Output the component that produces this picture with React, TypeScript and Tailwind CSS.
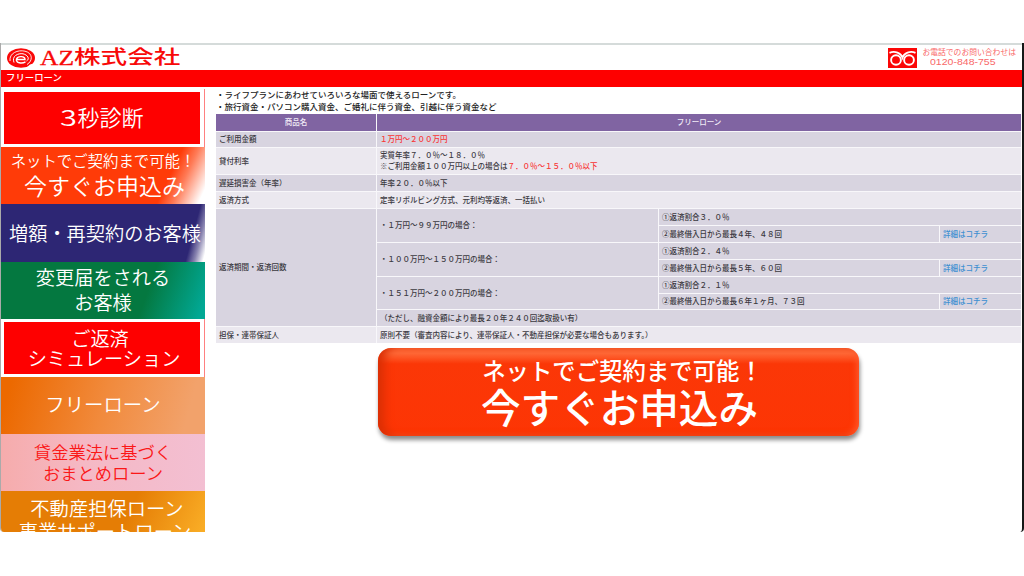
import { clsx } from "clsx";
import type { ReactNode } from "react";

const PLANS = [
  { label: "・１万円～９９万円の場合：", rate: "①返済割合３．０％", term: "②最終借入日から最長４年、４８回" },
  { label: "・１００万円～１５０万円の場合：", rate: "①返済割合２．４％", term: "②最終借入日から最長５年、６０回" },
  { label: "・１５１万円～２００万円の場合：", rate: "①返済割合２．１％", term: "②最終借入日から最長６年１ヶ月、７３回" },
];

function Cell({ children, className, light }: { children?: ReactNode; className?: string; light?: boolean }) {
  return (
    <div className={clsx("flex items-center pb-[2px] pl-[3px]", light ? "bg-[#ebe8ef]" : "bg-[#d8d4e0]", className)}>
      <div>{children}</div>
    </div>
  );
}

function Header() {
  return (
    <header>
      <div className="flex h-[27px] items-center border-t-2 border-[#d5dbda] bg-white pl-[5px] text-[#f80808]">
        <svg width="30" height="22" viewBox="0 0 30 22" className="shrink-0">
          <ellipse cx="15" cy="11" rx="14" ry="9.8" fill="#fa0808" />
          <path d="M4 14C3 6 12 2.5 19 4.2C27 6 27 14 21 17.5" fill="none" stroke="#fff" strokeWidth="0.9" />
          <path d="M8 15.5C5.5 9 12 6 17 6.8C22 8 24 12 20.5 14" fill="none" stroke="#fff" strokeWidth="1" />
          <path d="M11 12.5H19C19 9 12 8.5 10.5 12C9.5 16 16 17 19.5 14.8" fill="none" stroke="#fff" strokeWidth="1.4" />
          <path d="M24 17.5L30 16V22H19Z" fill="#fff" />
        </svg>
        <div className="ml-[4px] flex w-[142px] items-center pb-[3px] whitespace-nowrap">
          <span className="w-[34px] shrink-0 pt-[3px] font-['Liberation_Serif',serif] text-[22px] leading-[20px] [-webkit-text-stroke:0.3px_#f80808]">
            <span className="inline-block origin-left scale-x-[1.16]">AZ</span>
          </span>
          <span className="inline-block origin-left scale-x-[1.33] scale-y-[0.96] text-[20px] leading-[22px] font-medium">株式会社</span>
        </div>
        <div className="ml-auto flex items-center pr-[6px]">
          <svg width="29" height="20" viewBox="0 0 29 20">
            <rect width="29" height="20" fill="#fb0707" />
            <g fill="none" stroke="#fff" strokeWidth="1.9">
              <path d="M1.5 4.8C7 2.5 13 5 14.5 9.5C16 5 22 2.5 27.5 4.8" />
              <ellipse cx="8" cy="12" rx="4.9" ry="4.8" />
              <ellipse cx="21" cy="12" rx="4.9" ry="4.8" />
            </g>
          </svg>
          <div className="ml-[5px] pb-px whitespace-nowrap text-[#f96868]">
            <div className="h-[10px] text-[7.8px] leading-[9px]">お電話でのお問い合わせは</div>
            <div className="ml-[8px] h-[10px] w-[67px] font-['Liberation_Sans',sans-serif] text-[9px] leading-[10px]">
              <span className="inline-block origin-left scale-x-[1.17]">0120-848-755</span>
            </div>
          </div>
        </div>
      </div>
      <div className="h-[17px] bg-[#fe0000] pl-[5px] text-[9.4px] leading-[15px] font-medium text-white">フリーローン</div>
    </header>
  );
}

function Sidebar() {
  const framed = "w-[203px] border-y-3 border-l-3 border-r-4 border-white bg-[#fe0000] shadow-[1px_0_0_#ff8080]";
  const item = "flex flex-col items-center justify-center whitespace-nowrap";
  return (
    <nav className="mt-[2px] grid h-[443px] w-[204px] shrink-0 grid-rows-[58px_57px_58px_57px_58px_57px_57px_57px] overflow-hidden font-[350] text-white">
      <div className={clsx(item, framed, "pb-[3px] text-[22px] leading-[25px]")}>
        <span>
          <span className="mr-[5px] inline-block origin-left scale-x-[1.4]">3</span>秒診断
        </span>
      </div>
      <div className={clsx(item, "bg-[linear-gradient(115deg,#ff3b08_79%,#ff7b57_86%,#fff_97%)] pb-[5px]")}>
        <span className="text-[15.4px] leading-[24px]">ネットでご契約まで可能！</span>
        <span className="pl-[3px] text-[23px] leading-[27px]">今すぐお申込み</span>
      </div>
      <div className={clsx(item, "bg-[linear-gradient(105deg,#2d2674_91%,#8984b0_95%,#fff_99%)] text-[19.2px] leading-[24px]")}>
        <span className="pl-1">増額・再契約のお客様</span>
      </div>
      <div className={clsx(item, "bg-[linear-gradient(110deg,#047840_70%,#01a894_97%)] pb-[2px] text-[19.2px] leading-[25px]")}>
        <span>変更届をされる</span>
        <span>お客様</span>
      </div>
      <div className={clsx(item, framed, "pl-1 text-[19.2px] leading-[20px]")}>
        <span className="pr-2">ご返済</span>
        <span>シミュレーション</span>
      </div>
      <div className={clsx(item, "bg-[linear-gradient(105deg,#ec6900_5%,#f18a3c_50%,#f2a26b_90%)] pb-[4px] text-[19.4px] leading-[24px]")}>
        <span>フリーローン</span>
      </div>
      <div className={clsx(item, "bg-[linear-gradient(90deg,#f6acac,#f5b8c4_40%,#f3bfd2)] pb-px text-[17.3px] leading-[21px] text-[#fb1717]")}>
        <span>貸金業法に基づく</span>
        <span>おまとめローン</span>
      </div>
      <div className="bg-[linear-gradient(115deg,#e57d05_60%,#f9ac25_95%)] pt-[6px] text-center text-[19.3px] leading-[23px] whitespace-nowrap">
        <div className="pl-2">不動産担保ローン</div>
        <div className="pl-1">事業サポートローン</div>
      </div>
    </nav>
  );
}

function LoanTable() {
  return (
    <div className="grid grid-cols-[160px_281px_280px_81px] grid-rows-[17px_15px_26px_16px_16px_16px_16px_16px_16px_16px_15px_16px_16px] gap-px bg-[#f8f7fa] text-[7.5px] leading-[11px] font-medium whitespace-nowrap text-[#3b393f]">
      <div className="bg-[#8064a2] text-center leading-[15px] text-[#f0eaf6]">商品名</div>
      <div className="col-span-3 bg-[#8064a2] text-center leading-[15px] text-[#f0eaf6]">フリーローン</div>

      <Cell>ご利用金額</Cell>
      <Cell className="col-span-3 text-[#f83434]">１万円～２００万円</Cell>

      <Cell light>貸付利率</Cell>
      <Cell light className="col-span-3">
        実質年率７．０％～１８．０％
        <br />
        ※ご利用金額１００万円以上の場合は<span className="text-[#f83434]">７．０％～１５．０％以下</span>
      </Cell>

      <Cell>遅延損害金（年率）</Cell>
      <Cell className="col-span-3">年率２０．０％以下</Cell>

      <Cell light>返済方式</Cell>
      <Cell light className="col-span-3">定率リボルビング方式、元利均等返済、一括払い</Cell>

      <Cell className="row-span-7">返済期間・返済回数</Cell>
      {PLANS.map((p) => (
        <div key={p.label} className="contents">
          <Cell className="row-span-2">{p.label}</Cell>
          <Cell className="col-span-2">{p.rate}</Cell>
          <Cell>{p.term}</Cell>
          <Cell>
            <a href="#" className="text-[#3d8fd1]">詳細はコチラ</a>
          </Cell>
        </div>
      ))}
      <Cell className="col-span-3">（ただし、融資金額により最長２０年２４０回迄取扱い有）</Cell>

      <Cell light>担保・連帯保証人</Cell>
      <Cell light className="col-span-3">原則不要（審査内容により、連帯保証人・不動産担保が必要な場合もあります。）</Cell>
    </div>
  );
}

export default function App() {
  return (
    <div className="h-[576px] w-[1024px] overflow-hidden bg-white pt-[43px] font-['Noto_Sans_CJK_JP',sans-serif]">
      <div className="h-[489px] overflow-hidden rounded-b-[4px] border-r-2 border-l border-l-[#aaa] border-r-[#151817] bg-white">
        <Header />
        <div className="flex">
          <Sidebar />
          <main className="ml-[11px] w-[805px] shrink-0 pt-px">
            <div className="h-[26px] text-[8.5px] leading-[12px] font-medium whitespace-nowrap text-[#222]">
              <p>・ライフプランにあわせていろいろな場面で使えるローンです。</p>
              <p>・旅行資金・パソコン購入資金、ご婚礼に伴う資金、引越に伴う資金など</p>
            </div>
            <LoanTable />
            <button className="mt-[5px] ml-[162px] flex h-[88px] w-[481px] flex-col items-center rounded-[13px] bg-[linear-gradient(180deg,#ff6a38_0%,#ff6a38_6%,#fb3707_18%,#fd3504_100%)] pt-[7px] whitespace-nowrap text-white shadow-[inset_8px_0_10px_-2px_#d92f05,inset_-4px_-2px_6px_-2px_#ff5b2d,1px_4px_4px_rgba(0,0,0,0.45)]">
              <span className="pl-2 text-[23.4px] leading-[30px] font-medium">ネットでご契約まで可能！</span>
              <span className="pl-[2px] text-[39.6px] leading-[42px] font-medium">今すぐお申込み</span>
            </button>
          </main>
        </div>
      </div>
    </div>
  );
}
